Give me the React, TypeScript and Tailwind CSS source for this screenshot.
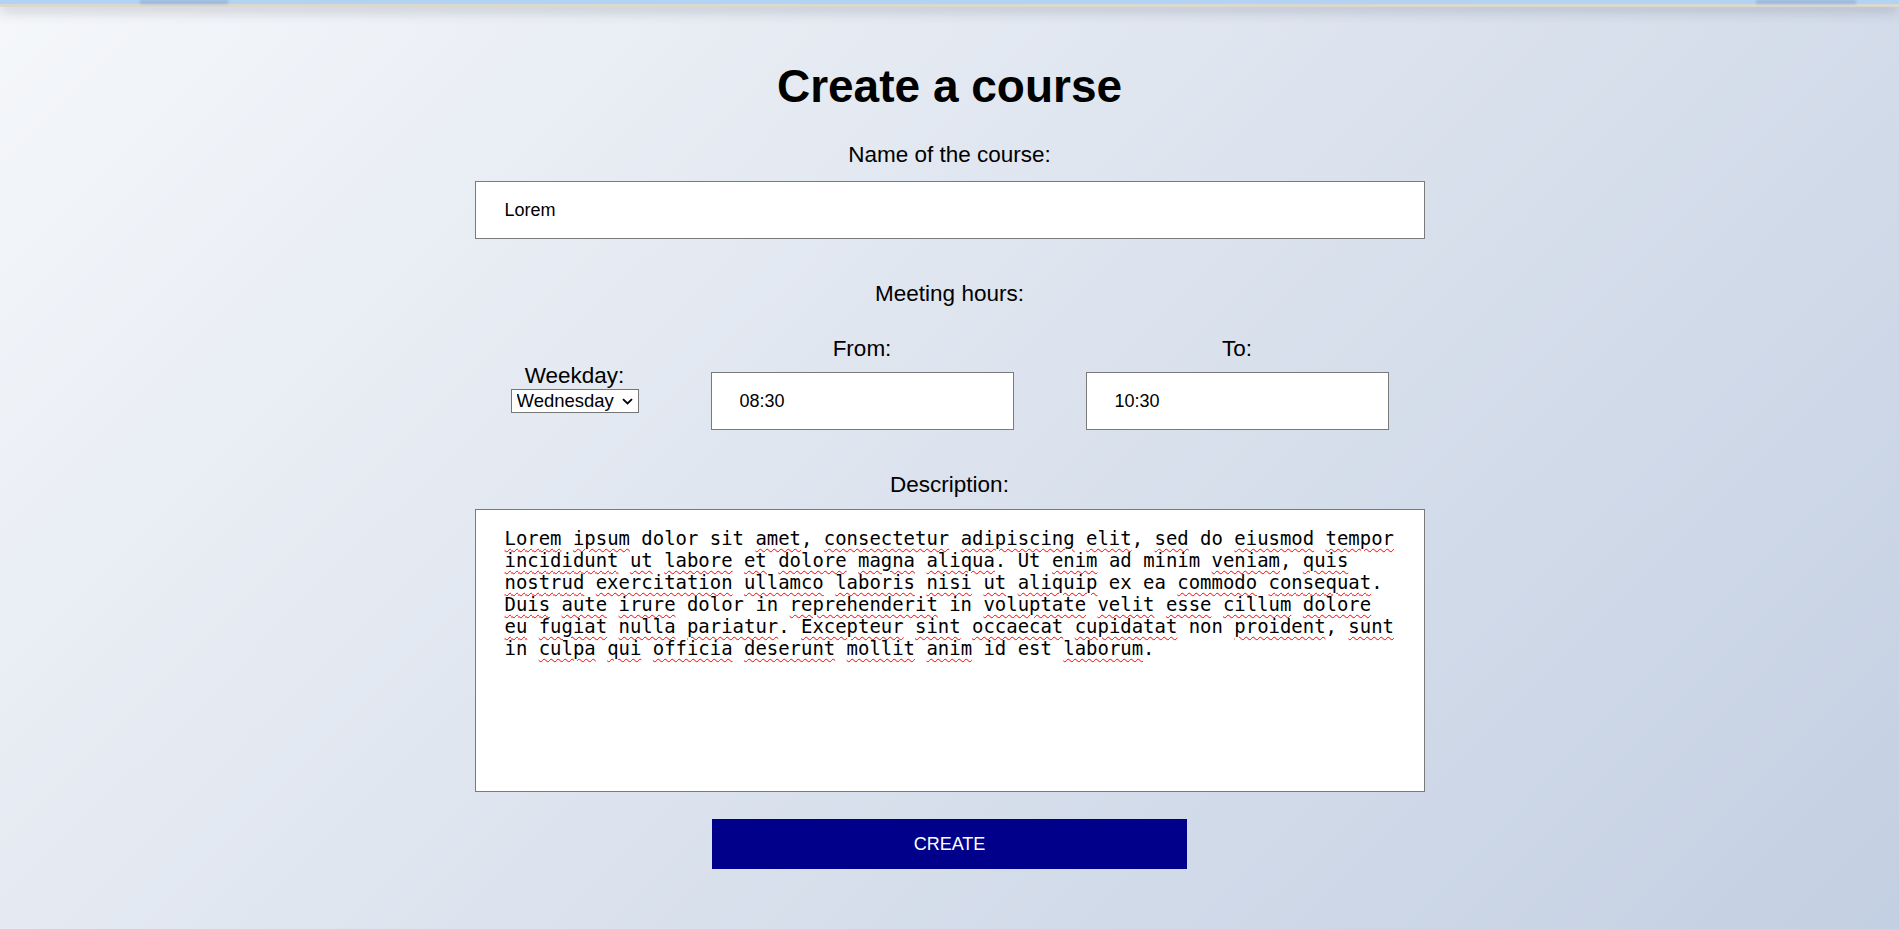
import React from "react";

const MISSPELLED = new Set([
  "Lorem", "ipsum", "amet", "consectetur", "adipiscing", "elit", "sed", "eiusmod", "tempor",
  "incididunt", "ut", "labore", "et", "dolore", "magna", "aliqua", "enim", "veniam", "quis",
  "nostrud", "exercitation", "ullamco", "laboris", "nisi", "aliquip", "commodo", "consequat",
  "Duis", "aute", "irure", "reprehenderit", "voluptate", "velit", "esse", "cillum",
  "eu", "fugiat", "nulla", "pariatur", "Excepteur", "sint", "occaecat", "cupidatat", "proident", "sunt",
  "culpa", "qui", "officia", "deserunt", "mollit", "anim", "laborum",
]);

const LINES = [
  "Lorem ipsum dolor sit amet, consectetur adipiscing elit, sed do eiusmod tempor",
  "incididunt ut labore et dolore magna aliqua. Ut enim ad minim veniam, quis",
  "nostrud exercitation ullamco laboris nisi ut aliquip ex ea commodo consequat.",
  "Duis aute irure dolor in reprehenderit in voluptate velit esse cillum dolore",
  "eu fugiat nulla pariatur. Excepteur sint occaecat cupidatat non proident, sunt",
  "in culpa qui officia deserunt mollit anim id est laborum.",
];

function Line({ text }: { text: string }) {
  const parts = text.split(/([A-Za-z]+)/);
  return (
    <div className="whitespace-pre">
      {parts.map((p, i) =>
        MISSPELLED.has(p) ? (
          <span
            key={i}
            className="underline decoration-wavy decoration-[#ff0000] decoration-1 underline-offset-[3px]"
          >
            {p}
          </span>
        ) : (
          <React.Fragment key={i}>{p}</React.Fragment>
        )
      )}
    </div>
  );
}

export default function App() {
  return (
    <div className="min-h-[929px] w-full bg-[linear-gradient(135deg,#f5f7fa_0%,#c3cfe2_100%)] font-['Liberation_Sans',Arial,sans-serif] text-black">
      {/* top bar (mostly scrolled off) */}
      <div className="relative h-[7px] w-full border-b-[3px] border-[#dbd8d1] bg-[#b3d3f3] shadow-[0_3px_14px_rgba(60,70,90,0.35)]">
        <div className="absolute left-[140px] top-0 h-[4px] w-[88px] bg-[#9cb9dc] blur-[1px]" />
        <div className="absolute left-[1756px] top-0 h-[4px] w-[100px] bg-[#9cb9dc] blur-[1px]" />
      </div>

      <div className="mx-auto flex w-[950px] flex-col">
        <h1 className="mt-[53px] text-center text-[46px] font-bold leading-[52px]">Create a course</h1>

        <label className="mt-[30px] block text-center text-[22.5px] leading-[26px]">Name of the course:</label>
        <input
          type="text"
          defaultValue="Lorem"
          className="mt-[13px] h-[58px] w-full border border-[#7a7a7a] bg-white pl-[29px] text-[18px] text-black outline-none"
        />

        <div className="mt-[42px] text-center text-[22.5px] leading-[26px]">Meeting hours:</div>

        <div className="mt-[29px] flex items-start justify-around">
          <div className="mt-[27px] flex w-[128px] flex-col items-center">
            <label className="text-[22.5px] leading-[26px]">Weekday:</label>
            <div className="relative h-[24px] w-[128px]">
              <select
                defaultValue="Wednesday"
                className="h-[24px] w-[128px] appearance-none border border-[#767676] bg-white pl-[5px] text-[18.5px] leading-[20px] text-black outline-none"
              >
                <option>Monday</option>
                <option>Tuesday</option>
                <option>Wednesday</option>
                <option>Thursday</option>
                <option>Friday</option>
                <option>Saturday</option>
                <option>Sunday</option>
              </select>
              <svg
                className="pointer-events-none absolute left-[111px] top-[9px]"
                width="11"
                height="7"
                viewBox="0 0 11 7"
                fill="none"
              >
                <path d="M1 1.2 L5.5 5.5 L10 1.2" stroke="#000" strokeWidth="1.8" />
              </svg>
            </div>
          </div>
          <div className="flex w-[303px] flex-col items-center">
            <label className="text-[22.5px] leading-[26px]">From:</label>
            <input
              type="text"
              defaultValue="08:30"
              className="mt-[10px] h-[58px] w-[303px] border border-[#7a7a7a] bg-white pl-[28px] text-[18px] text-black outline-none"
            />
          </div>
          <div className="flex w-[303px] flex-col items-center">
            <label className="text-[22.5px] leading-[26px]">To:</label>
            <input
              type="text"
              defaultValue="10:30"
              className="mt-[10px] h-[58px] w-[303px] border border-[#7a7a7a] bg-white pl-[28px] text-[18px] text-black outline-none"
            />
          </div>
        </div>

        <label className="mt-[42px] block text-center text-[22.5px] leading-[26px]">Description:</label>
        <div
          role="textbox"
          className="mt-[11px] h-[283px] w-full overflow-hidden border border-[#7a7a7a] bg-white px-[29px] pt-[18px] font-['DejaVu_Sans_Mono',monospace] text-[18.95px] leading-[21.9px] text-black"
        >
          {LINES.map((l, i) => (
            <Line key={i} text={l} />
          ))}
        </div>

        <button
          type="button"
          className="mx-auto mt-[27px] h-[50px] w-[475px] bg-[#00008b] text-[18px] text-white"
        >
          CREATE
        </button>
      </div>
    </div>
  );
}
